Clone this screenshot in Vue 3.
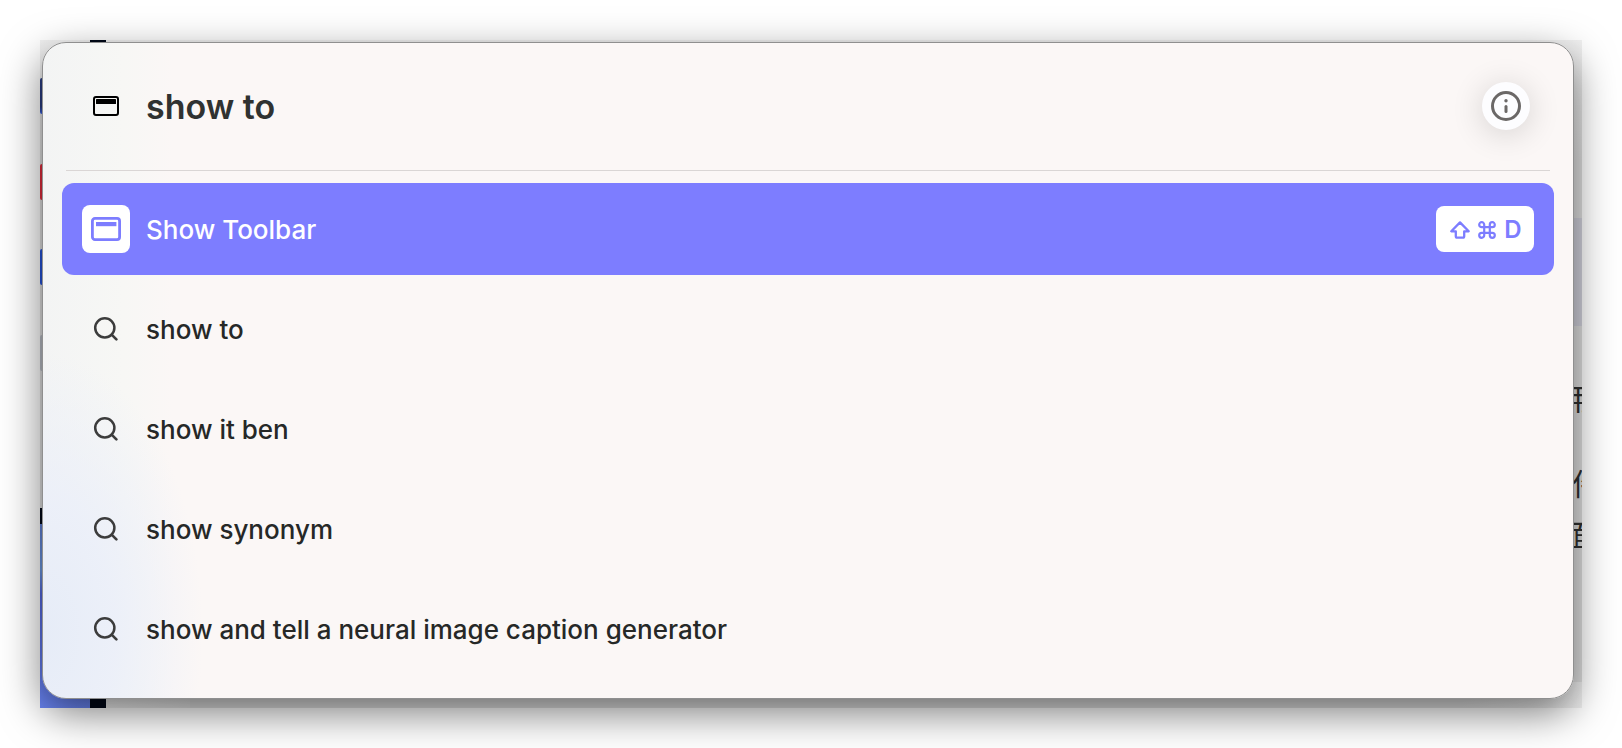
<template>
  <main class="stage">
    <div class="desktop">
      <div class="underlay" aria-hidden="true">
        <span class="mark mark--navy" />
        <span class="mark mark--red" />
        <span class="mark mark--blue" />
        <span class="mark mark--gray" />
        <span class="block block--frame" />
        <span class="block block--blue" />
        <span class="block block--column" />
        <span class="block block--side" />
        <span class="block block--corner" />
        <span class="glyph glyph--first">用</span>
        <span class="glyph glyph--second">件</span>
        <span class="glyph glyph--third">面</span>
      </div>

      <section class="palette" aria-label="Command bar">
        <header class="palette-header">
          <span class="slot">
            <svg class="icon-window" viewBox="0 0 26 20" aria-hidden="true">
              <rect x="1" y="1" width="24" height="18" rx="2" fill="none" stroke="currentColor" stroke-width="2" />
              <rect x="3" y="3" width="20" height="5" rx="0.6" fill="currentColor" />
            </svg>
          </span>
          <input
            v-model="query"
            class="query"
            type="text"
            aria-label="Search or enter a command"
            spellcheck="false"
            autocomplete="off"
          />
          <button type="button" class="info" aria-label="Info">
            <svg class="icon-info" viewBox="0 0 30 30" aria-hidden="true">
              <circle cx="15" cy="15" r="13.5" fill="none" stroke="currentColor" stroke-width="3" />
              <circle cx="15" cy="9.8" r="1.7" fill="currentColor" />
              <path d="M15 15.4v5" stroke="currentColor" stroke-width="3" stroke-linecap="round" />
            </svg>
          </button>
        </header>

        <ul class="results">
          <li v-for="(item, index) in results" :key="item.label">
            <button
              type="button"
              class="row"
              :class="{ 'row--active': index === active }"
              @click="active = index"
            >
              <span class="slot" :class="{ 'slot--tile': item.type === 'command' }">
                <svg v-if="item.type === 'command'" class="icon-command" viewBox="0 0 30 24" aria-hidden="true">
                  <rect x="1.4" y="1.4" width="27.2" height="21.2" rx="2.6" fill="none" stroke="currentColor" stroke-width="2.8" />
                  <rect x="5" y="5" width="20.4" height="4.2" fill="currentColor" />
                </svg>
                <svg v-else class="icon-search" viewBox="0 0 26 26" aria-hidden="true">
                  <circle cx="11.8" cy="11.8" r="9.6" fill="none" stroke="currentColor" stroke-width="2.5" />
                  <path d="M18.6 18.6l4.8 4.8" stroke="currentColor" stroke-width="2.7" stroke-linecap="round" />
                </svg>
              </span>
              <span class="row-label">{{ item.label }}</span>
              <kbd v-if="item.shortcut" class="shortcut">
                <svg class="icon-shift" viewBox="0 0 20 18" aria-label="Shift">
                  <path d="M10 1.4L1.3 10.3h4.5v4.9c0 .8.5 1.4 1.3 1.4h5.8c.8 0 1.3-.6 1.3-1.4v-4.9h4.5z" fill="none" stroke="currentColor" stroke-width="2.3" stroke-linejoin="round" />
                </svg>
                <svg class="icon-cmd" viewBox="0 0 18 18" aria-label="Command">
                  <path d="M6.2 6.2V3.7a2.5 2.5 0 1 0-2.5 2.5h10.6a2.5 2.5 0 1 0-2.5-2.5v10.6a2.5 2.5 0 1 0 2.5-2.5H3.7a2.5 2.5 0 1 0 2.5 2.5z" fill="none" stroke="currentColor" stroke-width="2.2" />
                </svg>
                <span>{{ item.shortcut }}</span>
              </kbd>
            </button>
          </li>
        </ul>
      </section>
    </div>
  </main>
</template>

<script setup>
import { ref } from 'vue'

const query = ref('show to')
const active = ref(0)

const results = [
  { type: 'command', label: 'Show Toolbar', shortcut: 'D' },
  { type: 'search', label: 'show to' },
  { type: 'search', label: 'show it ben' },
  { type: 'search', label: 'show synonym' },
  { type: 'search', label: 'show and tell a neural image caption generator' }
]
</script>

<style>
body {
  margin: 0;
  background: #fff;
}
</style>

<style scoped>
.stage {
  box-sizing: border-box;
  min-height: 100vh;
  padding: 40px 40px 0;
  overflow: hidden;
  font-family: Inter, "Liberation Sans", "Noto Sans CJK SC", sans-serif;
}

.desktop {
  position: relative;
  padding: 2px 8px 9px 2px;
}

/* page that peeks out around the palette */
.underlay {
  position: absolute;
  inset: 0;
  overflow: hidden;
  background: linear-gradient(#f2f2f2, #e0e0e0 120px);
}

.mark,
.block,
.glyph {
  position: absolute;
}

.mark {
  left: 0;
  width: 12px;
  height: 36px;
  border-radius: 2px;
}

.mark--navy {
  top: 38px;
  background: linear-gradient(#2a3c80 80%, #3560e8);
}

.mark--red {
  top: 124px;
  background: #e02c3c;
}

.mark--blue {
  top: 209px;
  background: #2452d8;
}

.mark--gray {
  top: 295px;
  background: #b8bcc4;
}

.block--frame {
  top: 0;
  bottom: 0;
  left: 50px;
  width: 16px;
  background: #000818;
}

.block--blue {
  top: 468px;
  bottom: 0;
  left: 0;
  width: 50px;
  border-top: 16px solid #000818;
  background: linear-gradient(#6080d8, #6c98e0 25%, #5468e0 38%, #6c88f8);
}

.block--column {
  bottom: 0;
  left: 66px;
  width: 84px;
  height: 16px;
  background: linear-gradient(to right, #f0f0f0, #e4e4e4);
}

.block--side {
  top: 178px;
  right: 0;
  width: 10px;
  height: 108px;
  background: #d2d2dc;
}

.block--corner {
  right: 0;
  bottom: 0;
  width: 120px;
  height: 26px;
  background: linear-gradient(to right, #e0e0e0, #f0f0f0);
}

.glyph {
  color: #303030;
  font-family: "Noto Sans CJK SC", sans-serif;
  font-size: 30px;
  line-height: 32px;
}

.glyph--first {
  top: 341px;
  right: -11px;
}

.glyph--second {
  top: 426px;
  right: -20px;
}

.glyph--third {
  top: 477px;
  right: -14px;
}

.palette {
  position: relative;
  border: 1px solid #8f8f8f;
  border-radius: 24px;
  background:
    radial-gradient(ellipse 160px 280px at 0 90%, #e6ecf7 0%, rgba(235, 239, 249, 0.9) 45%, rgba(245, 245, 246, 0) 100%),
    linear-gradient(to right, #f3f4f4 0, #f7f7f5 80px, #fbf7f6 130px);
  box-shadow: 0 14px 42px rgba(0, 0, 0, 0.52);
}

.palette-header {
  display: flex;
  align-items: center;
  gap: 16px;
  height: 126px;
  margin: 0 23px;
  padding: 0 20px 1px 16px;
  border-bottom: 1px solid #dad6d5;
}

.slot {
  display: flex;
  align-items: center;
  justify-content: center;
  flex-shrink: 0;
  width: 48px;
  height: 48px;
}

.slot--tile {
  border-radius: 8px;
  background: #fff;
  color: #7d7dff;
}

.icon-window {
  width: 26px;
  height: 20px;
  color: #000;
}

.icon-command {
  width: 30px;
  height: 24px;
}

.icon-search {
  width: 26px;
  height: 26px;
  color: #3c3c3c;
}

.query {
  flex: 1;
  min-width: 0;
  padding: 2px 0 0;
  border: 0;
  outline: 0;
  background: transparent;
  color: #303231;
  font: 600 34px/44px Inter, "Liberation Sans", sans-serif;
}

.info {
  display: flex;
  align-items: center;
  justify-content: center;
  flex-shrink: 0;
  width: 48px;
  height: 48px;
  padding: 0;
  border: 0;
  border-radius: 50%;
  background: #fdfdff;
  color: #6b6867;
  box-shadow: 0 4px 32px rgba(0, 0, 0, 0.16);
  cursor: pointer;
}

.icon-info {
  width: 30px;
  height: 30px;
}

.results {
  display: flex;
  flex-direction: column;
  gap: 8px;
  margin: 0;
  padding: 12px 19px 23px;
  list-style: none;
}

.row {
  display: flex;
  align-items: center;
  gap: 16px;
  width: 100%;
  height: 92px;
  padding: 0 20px;
  border: 0;
  border-radius: 12px;
  background: transparent;
  color: #262827;
  font: 500 26px/32px Inter, "Liberation Sans", sans-serif;
  text-align: left;
  cursor: pointer;
}

.row--active {
  background: #7d7dff;
  color: #fff;
}

.row-label {
  flex: 1;
  min-width: 0;
  padding-top: 2px;
}

.shortcut {
  display: flex;
  align-items: center;
  justify-content: center;
  gap: 8px;
  box-sizing: border-box;
  width: 98px;
  height: 46px;
  padding: 2px 0 0 2px;
  border-radius: 8px;
  background: #fff;
  color: #7d7dff;
  font: 600 24px/32px Inter, "Liberation Sans", sans-serif;
}

.icon-shift {
  width: 20px;
  height: 18px;
}

.icon-cmd {
  width: 18px;
  height: 18px;
}
</style>
